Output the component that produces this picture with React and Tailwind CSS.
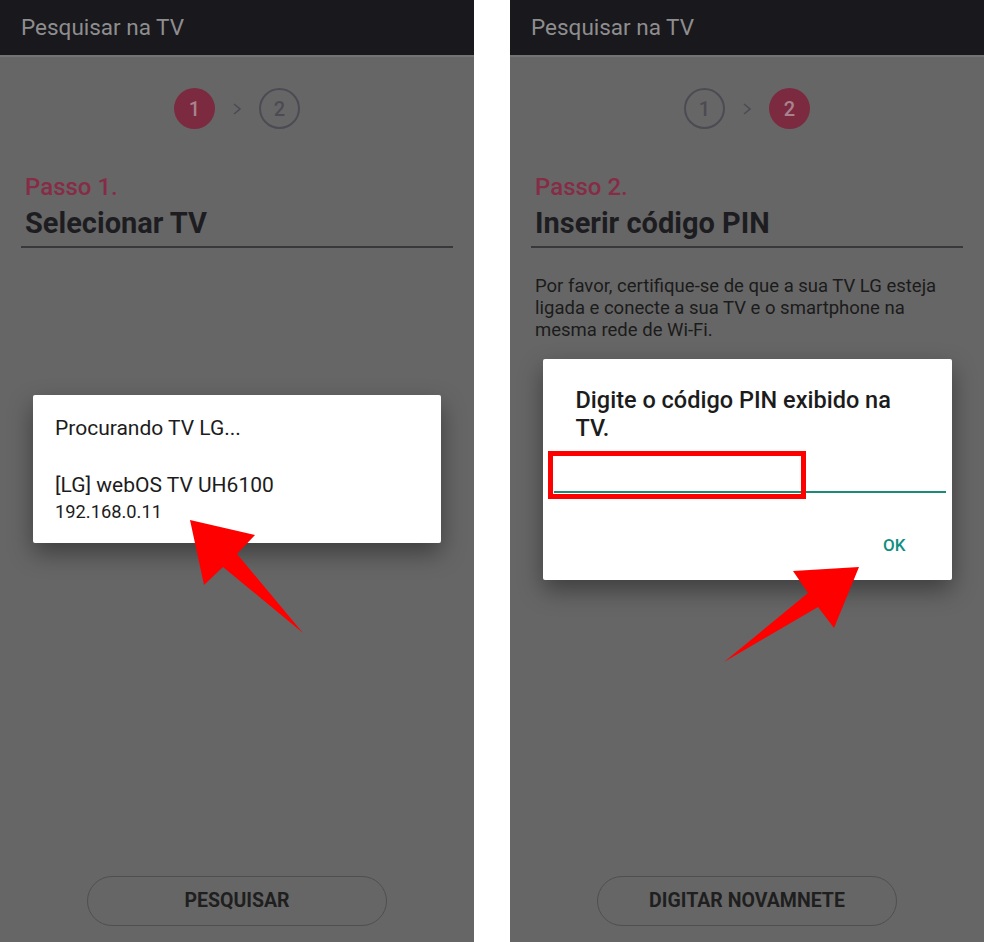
import React from 'react';

const StepDot = ({ n, active }) =>
  active ? (
    <div className="w-[41px] h-[41px] rounded-full bg-[#7c2a40] flex items-center justify-center text-[20px] font-medium text-[#a8838d]">
      {n}
    </div>
  ) : (
    <div className="w-[41px] h-[41px] rounded-full border-2 border-[#4c4b53] flex items-center justify-center text-[20px] font-medium text-[#4c4b53]">
      {n}
    </div>
  );

const Steps = ({ current }) => (
  <div className="flex items-center justify-center gap-[8px] pt-[31px]">
    <StepDot n="1" active={current === 1} />
    <svg width="26" height="16" viewBox="0 0 26 16" className="mx-[1px]">
      <path d="M10 3 L16 8 L10 13" fill="none" stroke="#4c4b53" strokeWidth="1.6" />
    </svg>
    <StepDot n="2" active={current === 2} />
  </div>
);

const Screen = ({ step, title, children, dialog, button }) => (
  <div className="relative w-[474px] h-[942px] bg-[#666666] flex flex-col">
    <div className="h-[55px] bg-[#19181d] flex items-center pl-[21px] text-[22.5px] text-[#8e8e8e]">
      Pesquisar na TV
    </div>
    <div className="h-[2px] bg-[#737373]" />
    <Steps current={step} />
    <div className="pt-[44px] px-[25px]">
      <div className="text-[24px] leading-[28px] font-medium text-[#862c47]">Passo {step}.</div>
      <div className="mt-[5px] text-[29px] leading-[34px] font-bold text-[#1d1d21]">{title}</div>
    </div>
    <div className="mx-[21px] mt-[6px] h-[2px] bg-[#38383c]" />
    {children}
    <div className="mt-auto pb-[16px] flex justify-center">
      <div className="w-[300px] h-[50px] rounded-full border-[1.5px] border-[#4f4f4f] flex items-center justify-center text-[19.5px] font-bold text-[#1f1f1f]">
        {button}
      </div>
    </div>
    <div className="absolute inset-0 pb-[4px] flex items-center justify-center">{dialog}</div>
  </div>
);

const SearchDialog = () => (
  <div className="w-[408px] bg-white rounded-[2px] shadow-[0_10px_24px_rgba(0,0,0,0.4)] pl-[22px] pt-[21px] pb-[20px] text-[#1c1c1c]">
    <div className="text-[21px] leading-[24px]">Procurando TV LG...</div>
    <div className="mt-[33px] text-[21px] leading-[24px]">[LG] webOS TV UH6100</div>
    <div className="mt-[4px] text-[18.3px] leading-[22px]">192.168.0.11</div>
  </div>
);

const PinDialog = () => (
  <div className="w-[409px] bg-white rounded-[2px] shadow-[0_10px_24px_rgba(0,0,0,0.4)] pt-[27px] pb-[25px] text-[#1c1c1c]">
    <div className="pl-[33px] text-[23.5px] leading-[28px] font-medium">
      Digite o código PIN exibido na
      <br />
      TV.
    </div>
    <div className="ml-[11px] mr-[6px] mt-[49px] h-[2px] bg-[#1b8a77]" />
    <div className="mt-[42px] flex justify-end pr-[46px]">
      <span className="text-[17px] leading-[20px] font-medium text-[#0f8f7f]">OK</span>
    </div>
  </div>
);

export default function App() {
  return (
    <div className="relative w-[984px] h-[942px] bg-white flex gap-[36px] font-[Roboto,sans-serif] overflow-hidden">
      <Screen step={1} title="Selecionar TV" dialog={<SearchDialog />} button="PESQUISAR" />
      <Screen step={2} title="Inserir código PIN" dialog={<PinDialog />} button="DIGITAR NOVAMNETE">
        <p className="mt-[27px] px-[25px] text-[18.5px] leading-[22px] text-[#1b1b1b]">
          Por favor, certifique-se de que a sua TV LG esteja
          <br />
          ligada e conecte a sua TV e o smartphone na
          <br />
          mesma rede de Wi-Fi.
        </p>
      </Screen>

      {/* callouts drawn over both screens */}
      <svg className="absolute inset-0 pointer-events-none" width="984" height="942" viewBox="0 0 984 942">
        <polygon points="190,520 255,535 237,554 303,633 223,567 204,585" fill="#ff0000" />
        <polygon points="859,567 834,628 818,607 724,662 808,593 793,571" fill="#ff0000" />
        <rect x="550.5" y="453.5" width="253" height="43" fill="none" stroke="#ff0000" strokeWidth="5" />
      </svg>
    </div>
  );
}
